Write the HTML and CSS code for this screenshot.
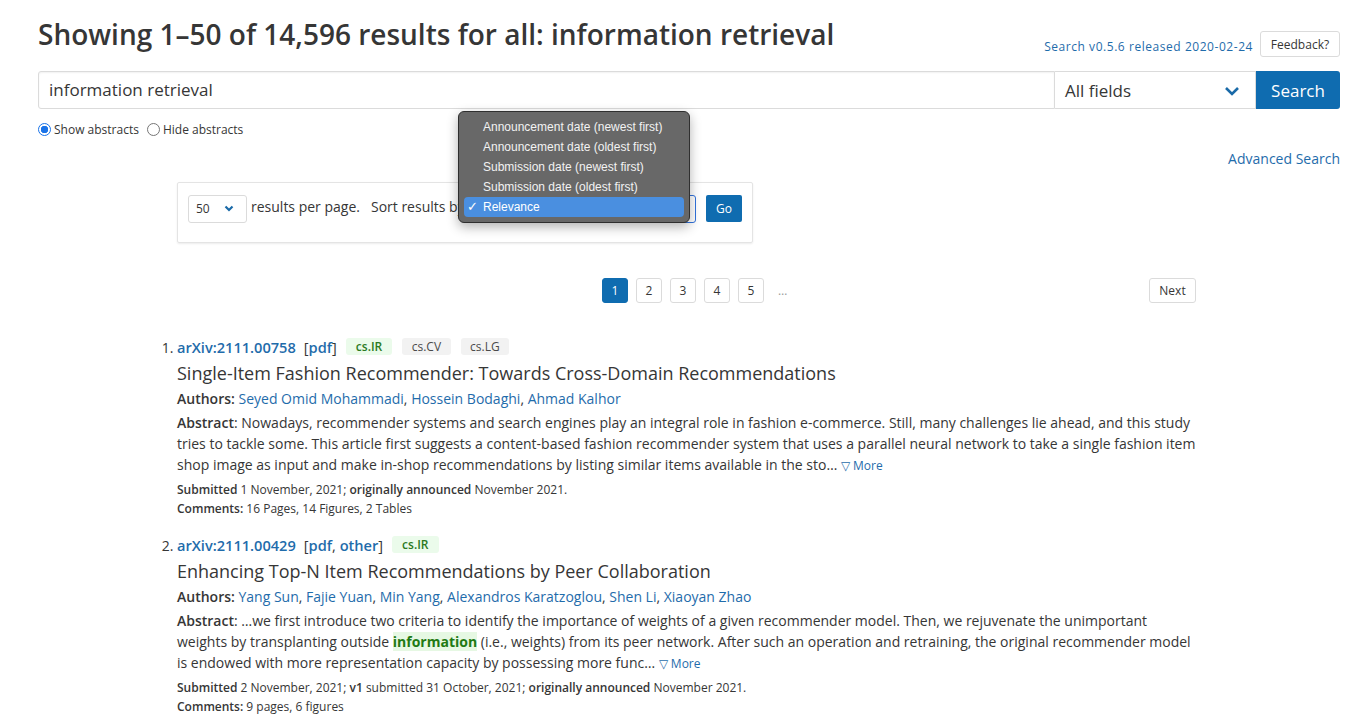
FILE: index.html
```html
<!DOCTYPE html>
<html>
<head>
<meta charset="utf-8">
<link rel="stylesheet" href="styles.css">
</head>
<body>
<div class="page">
  <header class="top">
    <h1 class="title">Showing 1–50 of 14,596 results for all: information retrieval</h1>
    <div class="top-right">
      <a class="release" href="#">Search v0.5.6 released 2020-02-24</a>
      <button class="feedback">Feedback?</button>
    </div>
  </header>

  <div class="searchbar">
    <div class="query">information retrieval</div>
    <div class="field-select">
      <span>All fields</span>
      <svg class="chev" width="16" height="10" viewBox="0 0 16 10"><path d="M2 2 L8 8 L14 2" fill="none" stroke="#1a6aa8" stroke-width="2.6"/></svg>
    </div>
    <button class="search-btn">Search</button>
  </div>

  <div class="under-row">
    <div class="radios">
      <label class="radio"><span class="dot on"></span>Show abstracts</label>
      <label class="radio"><span class="dot"></span>Hide abstracts</label>
    </div>
  </div>
  <div class="adv-row"><a href="#" class="adv">Advanced Search</a></div>

  <div class="main">
    <div class="options">
      <div class="mini-select">
        <span>50</span>
        <svg width="10" height="7" viewBox="0 0 10 7"><path d="M1.5 1.5 L5 5 L8.5 1.5" fill="none" stroke="#1a6aa8" stroke-width="2.2"/></svg>
      </div>
      <span class="opt-text">results per page.</span>
      <span class="opt-text sort-label">Sort results by</span>
      <div class="sort-select"></div>
      <button class="go">Go</button>

      <div class="popup">
        <div class="pop-item">Announcement date (newest first)</div>
        <div class="pop-item">Announcement date (oldest first)</div>
        <div class="pop-item">Submission date (newest first)</div>
        <div class="pop-item">Submission date (oldest first)</div>
        <div class="pop-item sel"><span class="check">✓</span>Relevance</div>
      </div>
    </div>

    <nav class="pagination">
      <div class="pages">
        <a class="pg cur" href="#">1</a>
        <a class="pg" href="#">2</a>
        <a class="pg" href="#">3</a>
        <a class="pg" href="#">4</a>
        <a class="pg" href="#">5</a>
        <span class="ellipsis">…</span>
      </div>
      <a class="pg next" href="#">Next</a>
    </nav>

    <ol class="results">
      <li class="result">
        <div class="r-head">
          <a href="#" class="arx">arXiv:2111.00758</a>
          <span class="links">[<a href="#">pdf</a>]</span>
          <span class="tag primary">cs.IR</span>
          <span class="tag">cs.CV</span>
          <span class="tag">cs.LG</span>
        </div>
        <p class="r-title">Single-Item Fashion Recommender: Towards Cross-Domain Recommendations</p>
        <p class="authors"><b>Authors:</b> <a href="#">Seyed Omid Mohammadi</a>, <a href="#">Hossein Bodaghi</a>, <a href="#">Ahmad Kalhor</a></p>
        <p class="abstract"><b>Abstract</b>: Nowadays, recommender systems and search engines play an integral role in fashion e-commerce. Still, many challenges lie ahead, and this study tries to tackle some. This article first suggests a content-based fashion recommender system that uses a parallel neural network to take a single fashion item shop image as input and make in-shop recommendations by listing similar items available in the sto… <a href="#" class="more">▽ More</a></p>
        <p class="meta first"><b>Submitted</b> 1 November, 2021; <b>originally announced</b> November 2021.</p>
        <p class="meta"><b>Comments:</b> 16 Pages, 14 Figures, 2 Tables</p>
      </li>
      <li class="result">
        <div class="r-head">
          <a href="#" class="arx">arXiv:2111.00429</a>
          <span class="links">[<a href="#">pdf</a>, <a href="#">other</a>]</span>
          <span class="tag primary">cs.IR</span>
        </div>
        <p class="r-title">Enhancing Top-N Item Recommendations by Peer Collaboration</p>
        <p class="authors"><b>Authors:</b> <a href="#">Yang Sun</a>, <a href="#">Fajie Yuan</a>, <a href="#">Min Yang</a>, <a href="#">Alexandros Karatzoglou</a>, <a href="#">Shen Li</a>, <a href="#">Xiaoyan Zhao</a></p>
        <p class="abstract"><b>Abstract</b>: …we first introduce two criteria to identify the importance of weights of a given recommender model. Then, we rejuvenate the unimportant weights by transplanting outside <span class="hl">information</span> (i.e., weights) from its peer network. After such an operation and retraining, the original recommender model is endowed with more representation capacity by possessing more func… <a href="#" class="more">▽ More</a></p>
        <p class="meta first"><b>Submitted</b> 2 November, 2021; <b>v1</b> submitted 31 October, 2021; <b>originally announced</b> November 2021.</p>
        <p class="meta"><b>Comments:</b> 9 pages, 6 figures</p>
      </li>
    </ol>
  </div>
</div>
</body>
</html>
```

FILE: styles.css
```css
* { box-sizing: border-box; }
html, body { margin: 0; padding: 0; background: #fff; }
body {
  font-family: "Open Sans", "Liberation Sans", sans-serif;
  color: #363636;
  overflow: hidden;
}
a { color: #1f6cab; text-decoration: none; }
p { margin: 0; }

.page { padding: 0 10px 0 38px; }

.top { display: flex; justify-content: space-between; align-items: flex-start; padding-top: 14px; }
.title { margin: 0; font-size: 28px; font-weight: 600; line-height: 40px; color: #363636; }
.top-right { display: flex; align-items: center; gap: 7px; margin-top: 17px; }
.release { font-size: 12px; letter-spacing: 0.55px; margin-top: 4px; }
.feedback {
  font-family: "Open Sans", sans-serif; font-size: 12px; color: #363636;
  background: #fff; border: 1px solid #dbdbdb; border-radius: 3px;
  height: 26px; padding: 0 8px; width: 80px;
}

.searchbar { display: flex; margin-top: 14px; height: 38px; }
.query {
  flex: 1; border: 1px solid #dbdbdb; border-radius: 3px 0 0 3px;
  font-size: 17px; padding: 0 10px; line-height: 36px; color: #363636;
  box-shadow: inset 0 1px 2px rgba(10,10,10,0.06);
}
.field-select {
  width: 201px; border: 1px solid #dbdbdb; border-left: none;
  display: flex; align-items: center; justify-content: space-between;
  padding: 0 15px 0 10px; font-size: 17px;
}
.chev { margin-top: 2px; }
.search-btn {
  width: 84px; background: #0f6cb0; color: #fff; border: none;
  border-radius: 0 3px 3px 0; font-family: "Open Sans", sans-serif; font-size: 17px;
}

.under-row { margin-top: 12px; height: 16px; }
.radios { display: flex; gap: 8px; font-size: 12px; }
.radio { display: flex; align-items: center; gap: 3px; }
.dot {
  width: 13px; height: 13px; border-radius: 50%; border: 1px solid #767676;
  display: inline-block; background: #fff;
}
.dot.on { border: 1px solid #1a73e8; background: radial-gradient(circle, #1a73e8 0 3.5px, #fff 4px); }

.adv-row { display: flex; justify-content: flex-end; margin-top: 12px; height: 22px; }
.adv { font-size: 14px; }

.main { padding: 0 144px 0 139px; }

.options {
  position: relative; margin-top: 11px; width: 576px; height: 61px;
  border: 1px solid #e4e4e4; border-radius: 2px;
  box-shadow: 0 1px 2px rgba(10,10,10,0.08);
  display: flex; align-items: center; padding: 0 10px 10px;
  white-space: nowrap;
}
.options > * { flex-shrink: 0; }
.mini-select {
  width: 59px; height: 28px; border: 1px solid #dbdbdb; border-radius: 3px;
  display: flex; align-items: center; justify-content: space-between;
  padding: 0 12px 0 7px; font-size: 12px; margin-top: 2px;
}
.opt-text { font-size: 14px; margin-top: -2px; margin-left: 4px; }
.sort-label { margin-left: 11px; }
.sort-select {
  flex: 1; height: 28px; border: 1px solid #3273dc; border-radius: 3px; margin-top: 2px; margin-left: 2px;
}
.go {
  margin-left: 10px; width: 36px; height: 27px; background: #0f6cb0; color: #fff;
  border: none; border-radius: 2px; font-family: "Open Sans", sans-serif; font-size: 12px; margin-top: 2px;
}

.popup {
  position: absolute; left: 280px; top: -72px; width: 232px; height: 112px;
  background: #686868; border: 1px solid #2f2f2f; border-radius: 6px;
  box-shadow: 0 4px 12px rgba(0,0,0,0.3);
  padding: 5px 5px; color: #f2f2f2;
  font-family: "Liberation Sans", Arial, sans-serif; font-size: 12px;
}
.pop-item { height: 20px; line-height: 20px; padding-left: 19px; position: relative; }
.pop-item.sel { background: #4a8fe0; border-radius: 4px; color: #fff; }
.check { position: absolute; left: 3px; top: 0; font-size: 13px; }

.pagination {
  display: flex; justify-content: space-between; align-items: center;
  margin-top: 34px; padding-left: 425px; height: 26px;
}
.pages { display: flex; gap: 8px; align-items: center; }
.pg {
  min-width: 26px; height: 25px; border: 1px solid #dbdbdb; border-radius: 3px;
  font-size: 12px; color: #363636; display: inline-flex; align-items: center; justify-content: center;
}
.pg.cur { background: #0f6cb0; border-color: #0f6cb0; color: #fff; }
.ellipsis { font-size: 12px; color: #9a9a9a; margin-left: 6px; }
.next { width: 47px; }

.results { margin: 33px 0 0 0; padding-left: 0; list-style-position: outside; font-size: 14px; }
.result { margin-bottom: 16px; }
.result::marker { color: #363636; font-size: 14px; }
.r-head { display: flex; align-items: center; height: 21px; font-size: 14px; }
.arx { font-weight: 600; font-size: 14.6px; }
.links { margin-left: 8px; font-size: 14.6px; }
.links a { font-weight: 600; }
.tag {
  margin-left: 10px; background: #f2f2f2; color: #4a4a4a; border-radius: 3px;
  font-size: 12px; height: 17px; line-height: 17px; padding: 0 9.5px;
}
.links + .tag { margin-left: 9px; }
.tag.primary { background: #ebfbeb; color: #2b7a1f; font-weight: 600; padding: 0 10px; }
.r-title { font-size: 18px; font-weight: 500; margin-top: 3px; line-height: 26px; }
.authors { font-size: 14px; line-height: 22px; margin-top: 2px; }
.authors b { font-weight: 600; }
.abstract { font-size: 14px; line-height: 21px; margin-top: 2px; }
.abstract b { font-weight: 600; }
.more { font-size: 12px; }
.hl { background: #e6f8e3; color: #1f7a14; font-weight: 700; }
.meta { font-size: 12px; line-height: 19px; }
.meta.first { margin-top: 4px; }
.meta b { font-weight: 600; }
```
